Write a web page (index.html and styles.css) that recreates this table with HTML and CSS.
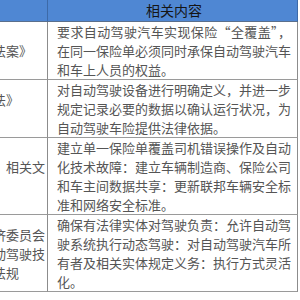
FILE: index.html
```html
<!DOCTYPE html>
<html lang="zh-CN">
<head>
<meta charset="utf-8">
<title>相关内容</title>
<link rel="stylesheet" href="styles.css">
</head>
<body>
<div class="grid">
  <div class="cell head lead"></div>
  <div class="cell head main">相关内容</div>

  <div class="cell lead"><div>《自动驾驶法案》</div></div>
  <div class="cell main">要求自动驾驶汽车实现保险“全覆盖”，在同一保险单必须同时承保自动驾驶汽车和车上人员的权益。</div>

  <div class="cell lead"><div>《机动车法》<br>草案</div></div>
  <div class="cell main">对自动驾驶设备进行明确定义，并进一步规定记录必要的数据以确认运行状况，为自动驾驶车险提供法律依据。</div>

  <div class="cell lead"><div>运输部与国会、相关文件</div></div>
  <div class="cell main">建立单一保险单覆盖司机错误操作及自动化技术故障：建立车辆制造商、保险公司和车主间数据共享：更新联邦车辆安全标准和网络安全标准。</div>

  <div class="cell lead"><div>联合国欧洲经济委员会的全球统一自动驾驶技术标准与法规</div></div>
  <div class="cell main">确保有法律实体对驾驶负责：允许自动驾驶系统执行动态驾驶：对自动驾驶汽车所有者及相关实体规定义务：执行方式灵活化。</div>
</div>
</body>
</html>
```

FILE: styles.css
```css
html, body {
  margin: 0;
  padding: 0;
  background: #ffffff;
}

body {
  width: 300px;
  height: 300px;
  overflow: hidden;
  font-family: "Noto Sans CJK SC", sans-serif;
  font-size: 13px;
  line-height: 19px;
  color: #555555;
}

.grid {
  display: grid;
  grid-template-columns: 140px 250px;
  margin-left: -92px;
  width: 390px;
}

.cell {
  box-sizing: border-box;
  border-right: 1px solid #8c8c8c;
  border-bottom: 1px solid #9a9a9a;
}

.lead {
  display: flex;
  flex-direction: column;
  justify-content: center;
  text-align: center;
  padding: 0 2px 0 7px;
}

.main {
  padding: 0 6px 0 9px;
  text-align: justify;
}

.head {
  background: #4f87d3;
  height: 22px;
  border-right-color: #3d6aa8;
  border-bottom-color: #5a6f8c;
}

.head.main {
  font-size: 14px;
  line-height: 21px;
  text-align: center;
  color: #151515;
}
```
